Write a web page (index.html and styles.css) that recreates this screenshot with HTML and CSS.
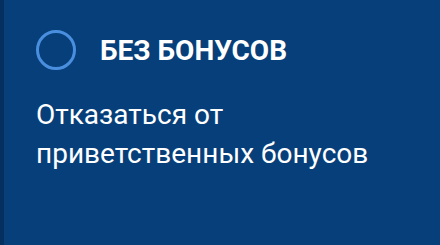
FILE: index.html
```html
<!DOCTYPE html>
<html lang="ru">

<head>
    <meta charset="UTF-8">
    <meta name="viewport" content="width=device-width, initial-scale=1.0">
    <title>Без бонусов</title>
    <link rel="stylesheet" href="styles.css">
</head>

<body>
    <!-- Bonus option card -->
    <div class="bonus-card">
        <div class="bonus-head">
            <span class="radio"></span>
            <h2 class="bonus-title">БЕЗ БОНУСОВ</h2>
        </div>
        <p class="bonus-text">Отказаться от приветственных бонусов</p>
    </div>
</body>

</html>
```

FILE: styles.css
```css
body {
    margin: 0;
    padding: 0;
    font-family: Roboto, "Noto Sans", sans-serif;
    background: #073f7a;
    color: white;
}

.bonus-card {
    box-sizing: border-box;
    height: 245px;
    padding: 30px 36px 0 32px;
    border-left: 4px solid #052f5e;
    background: #073f7a;
}

.bonus-head {
    display: flex;
    align-items: center;
    gap: 24px;
}

.radio {
    box-sizing: border-box;
    width: 40px;
    height: 40px;
    border: 3px solid #4a8fdf;
    border-radius: 50%;
    flex-shrink: 0;
}

.bonus-title {
    margin: 0;
    font-size: 28px;
    font-weight: bold;
}

.bonus-text {
    margin: 25px 0 0;
    max-width: 360px;
    font-size: 28px;
    line-height: 39px;
}
```
